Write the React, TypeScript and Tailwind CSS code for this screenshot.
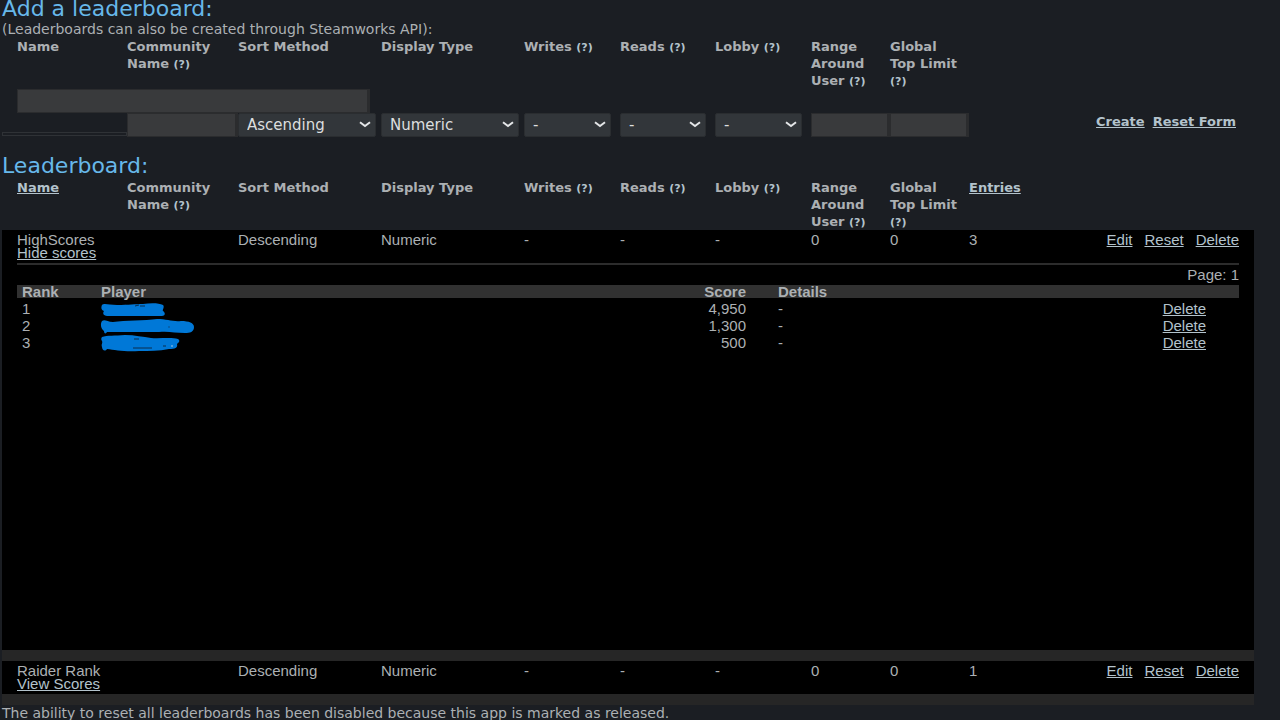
import React from 'react';
import clsx from 'clsx';

interface Column {
  id: string;
  label: string;
  hint?: boolean;
  width: string;
}

const columns: Column[] = [
  { id: 'name', label: 'Name', width: 'w-[125px]' },
  { id: 'community', label: 'Community Name', hint: true, width: 'w-[111px]' },
  { id: 'sort', label: 'Sort Method', width: 'w-[143px]' },
  { id: 'display', label: 'Display Type', width: 'w-[143px]' },
  { id: 'writes', label: 'Writes', hint: true, width: 'w-[96px]' },
  { id: 'reads', label: 'Reads', hint: true, width: 'w-[95px]' },
  { id: 'lobby', label: 'Lobby', hint: true, width: 'w-[96px]' },
  { id: 'range', label: 'Range Around User', hint: true, width: 'w-[79px]' },
  { id: 'limit', label: 'Global Top Limit', hint: true, width: 'w-[79px]' },
];

const scores = [
  {
    rank: 1,
    score: '4,950',
    mark: 'M1 4 C3 2 8 4 16 4 C28 4 34 3 42 3 C50 2 58 2 62 4 C64 6 61 9 62 10 C65 12 64 15 61 15 L8 15 C3 15 1 13 3 10 C0 9 0 6 1 4 Z',
  },
  {
    rank: 2,
    score: '1,300',
    mark: 'M1 3 C4 1 6 4 12 4 C24 2 44 3 56 1 C66 1 72 4 80 3 C88 3 93 5 93 9 C93 14 89 15 84 15 C74 15 68 13 58 14 L6 14 C5 16 3 16 3 13 C0 11 -1 6 1 3 Z',
  },
  {
    rank: 3,
    score: '500',
    mark: 'M1 2 C6 0 14 1 24 0 C34 0 42 2 50 3 C58 4 70 2 77 4 C80 6 77 8 76 9 C77 13 74 14 68 14 C58 16 48 16 38 16 C24 17 14 15 6 14 C4 17 1 15 1 12 C0 9 2 8 1 6 C0 5 0 3 1 2 Z',
  },
];

const Hint: React.FC = () => <span className="text-[11px] leading-none text-[#b3c3cc]">(?)</span>;

const Link: React.FC<{ children: React.ReactNode }> = ({ children }) => (
  <a href="#" className="text-[#b3c3cc] underline hover:text-white">
    {children}
  </a>
);

const Dropdown: React.FC<{ id: string; value: string; className: string }> = ({ id, value, className }) => (
  <div className={clsx('relative', className)}>
    <select
      id={id}
      className="h-6 w-full appearance-none rounded-xs border border-[#2a2d30] bg-[#32363a] pl-2 text-[15px] leading-[22px] text-[#dcdedf]"
    >
      <option>{value}</option>
    </select>
    <svg
      className="pointer-events-none absolute top-2 right-[5px] h-[7px] w-3"
      viewBox="0 0 12 7"
      fill="none"
      stroke="#e4e6e8"
      strokeWidth="2"
    >
      <path d="M1 1.2 L6 5 L11 1.2" />
    </svg>
  </div>
);

const inputStyle = 'h-6 border border-r-3 border-[#2b2c2e] bg-[#393a3c] px-2 text-[13px] text-[#dcdedf]';

const AddForm: React.FC = () => (
  <form className="grid grid-cols-[125px_111px_143px_143px_96px_95px_96px_79px_79px_1fr] text-[13px] leading-[17px]">
    {columns.map((col) => (
      <label
        key={col.id}
        htmlFor={col.id}
        className={clsx('font-bold', col.id === 'name' && 'pl-[15px]', col.id === 'limit' && 'pr-1')}
      >
        {col.label} {col.hint && <Hint />}
      </label>
    ))}

    <div className="col-span-full pl-[15px]">
      <input id="name" type="text" className={clsx(inputStyle, 'block w-[353px]')} />
    </div>

    <div className="mb-px h-1 self-end border border-[#2f3236]" />
    <input id="community" type="text" className={clsx(inputStyle, 'w-full')} />
    <Dropdown id="sort" value="Ascending" className="mr-[5px]" />
    <Dropdown id="display" value="Numeric" className="mr-[5px]" />
    <Dropdown id="writes" value="-" className="mr-[9px]" />
    <Dropdown id="reads" value="-" className="mr-[9px]" />
    <Dropdown id="lobby" value="-" className="mr-[9px]" />
    <input id="range" type="text" className={clsx(inputStyle, 'w-full')} />
    <input id="limit" type="text" className={clsx(inputStyle, 'w-full')} />
    <div className="flex justify-end gap-2 pr-[18px] font-bold">
      <button type="submit" className="h-[17px] text-[#b3c3cc] underline">Create</button>
      <button type="reset" className="h-[17px] text-[#b3c3cc] underline">Reset Form</button>
    </div>
  </form>
);

const BoardRow: React.FC<{ name: string; toggle: string; entries: number }> = ({ name, toggle, entries }) => (
  <tr className="bg-black align-top">
    <td className="pt-[3px] pl-[15px]" colSpan={2}>
      {name}
      <br />
      <Link>{toggle}</Link>
    </td>
    <td className="pt-[3px]">Descending</td>
    <td className="pt-[3px]">Numeric</td>
    <td className="pt-[3px]">-</td>
    <td className="pt-[3px]">-</td>
    <td className="pt-[3px]">-</td>
    <td className="pt-[3px]">0</td>
    <td className="pt-[3px]">0</td>
    <td className="pt-[3px]">{entries}</td>
    <td className="pt-[3px] pr-[15px]">
      <div className="flex justify-end gap-3">
        <Link>Edit</Link>
        <Link>Reset</Link>
        <Link>Delete</Link>
      </div>
    </td>
  </tr>
);

const Separator: React.FC = () => (
  <tr>
    <td colSpan={11} className="h-[11px] bg-[#262626]" />
  </tr>
);

const ScoreList: React.FC = () => (
  <div className="mx-[15px] mt-1 min-h-[387px] border-t-2 border-[#2c2c2c]">
    <p className="pt-[3px] pb-1 text-right">Page: 1</p>
    <table className="w-full table-fixed">
      <thead>
        <tr className="h-[13px] border-b-2 border-black bg-[#313131] text-left">
          <th className="w-[84px] pl-[5px]">Rank</th>
          <th>Player</th>
          <th className="w-[100px] text-right">Score</th>
          <th className="w-[381px] pl-8">Details</th>
          <th className="w-[112px]" />
        </tr>
      </thead>
      <tbody className="leading-4">
        {scores.map((row) => (
          <tr key={row.rank}>
            <td className="pt-px pl-[5px]">{row.rank}</td>
            <td>
              <svg className="block h-4 w-24 overflow-visible" viewBox="0 0 96 16" fill="#0078d7">
                <path d={row.mark} />
                {row.rank === 1 && <path d="M34 5 l4 -1 M39 5 h5" stroke="#0b2c4c" />}
                {row.rank === 2 && <path d="M67 9 h2" stroke="#0b4c85" />}
                {row.rank === 3 && (
                  <>
                    <path d="M33 4 h5 M32 13 h19 M62 11 h3" stroke="#0b2c4c" />
                    <path d="M70 11 h2" stroke="#a9c6dc" />
                  </>
                )}
              </svg>
            </td>
            <td className="pt-px text-right">{row.score}</td>
            <td className="pt-px pl-8">-</td>
            <td className="pt-px pr-[33px] text-right">
              <Link>Delete</Link>
            </td>
          </tr>
        ))}
      </tbody>
    </table>
  </div>
);

const BoardTable: React.FC = () => (
  <table className="w-full table-fixed font-['Liberation_Sans',sans-serif] text-[15px] leading-[13px]">
    <thead className="font-['DejaVu_Sans',sans-serif] text-[13px] leading-[17px]">
      <tr className="text-left align-top">
        {columns.map((col) => (
          <th
            key={col.id}
            className={clsx(col.width, col.id === 'name' && 'pl-[15px]', col.id === 'limit' && 'pr-1')}
          >
            {col.id === 'name' ? <Link>{col.label}</Link> : col.label} {col.hint && <Hint />}
          </th>
        ))}
        <th className="w-[80px]">
          <Link>Entries</Link>
        </th>
        <th />
      </tr>
    </thead>
    <tbody>
      <BoardRow name="HighScores" toggle="Hide scores" entries={3} />
      <tr className="bg-black">
        <td colSpan={11}>
          <ScoreList />
        </td>
      </tr>
      <Separator />
      <BoardRow name="Raider Rank" toggle="View Scores" entries={1} />
      <tr>
        <td colSpan={11} className="h-1 bg-black" />
      </tr>
      <Separator />
    </tbody>
  </table>
);

const App: React.FC = () => {
  return (
    <main className="min-h-screen bg-[#1b1e23] pr-[26px] pl-[2px] font-['DejaVu_Sans',sans-serif] text-[14px] text-[#acb0b3]">
      <h2 className="text-[22px] leading-[18px] text-[#67b8ea]">Add a leaderboard:</h2>
      <p className="pt-[2px] leading-[18px]">(Leaderboards can also be created through Steamworks API):</p>
      <AddForm />

      <h2 className="mt-5 mb-1 text-[22px] leading-[18px] text-[#67b8ea]">Leaderboard:</h2>
      <BoardTable />
      <p className="leading-4">
        The ability to reset all leaderboards has been disabled because this app is marked as released.
      </p>
    </main>
  );
};

export default App;
